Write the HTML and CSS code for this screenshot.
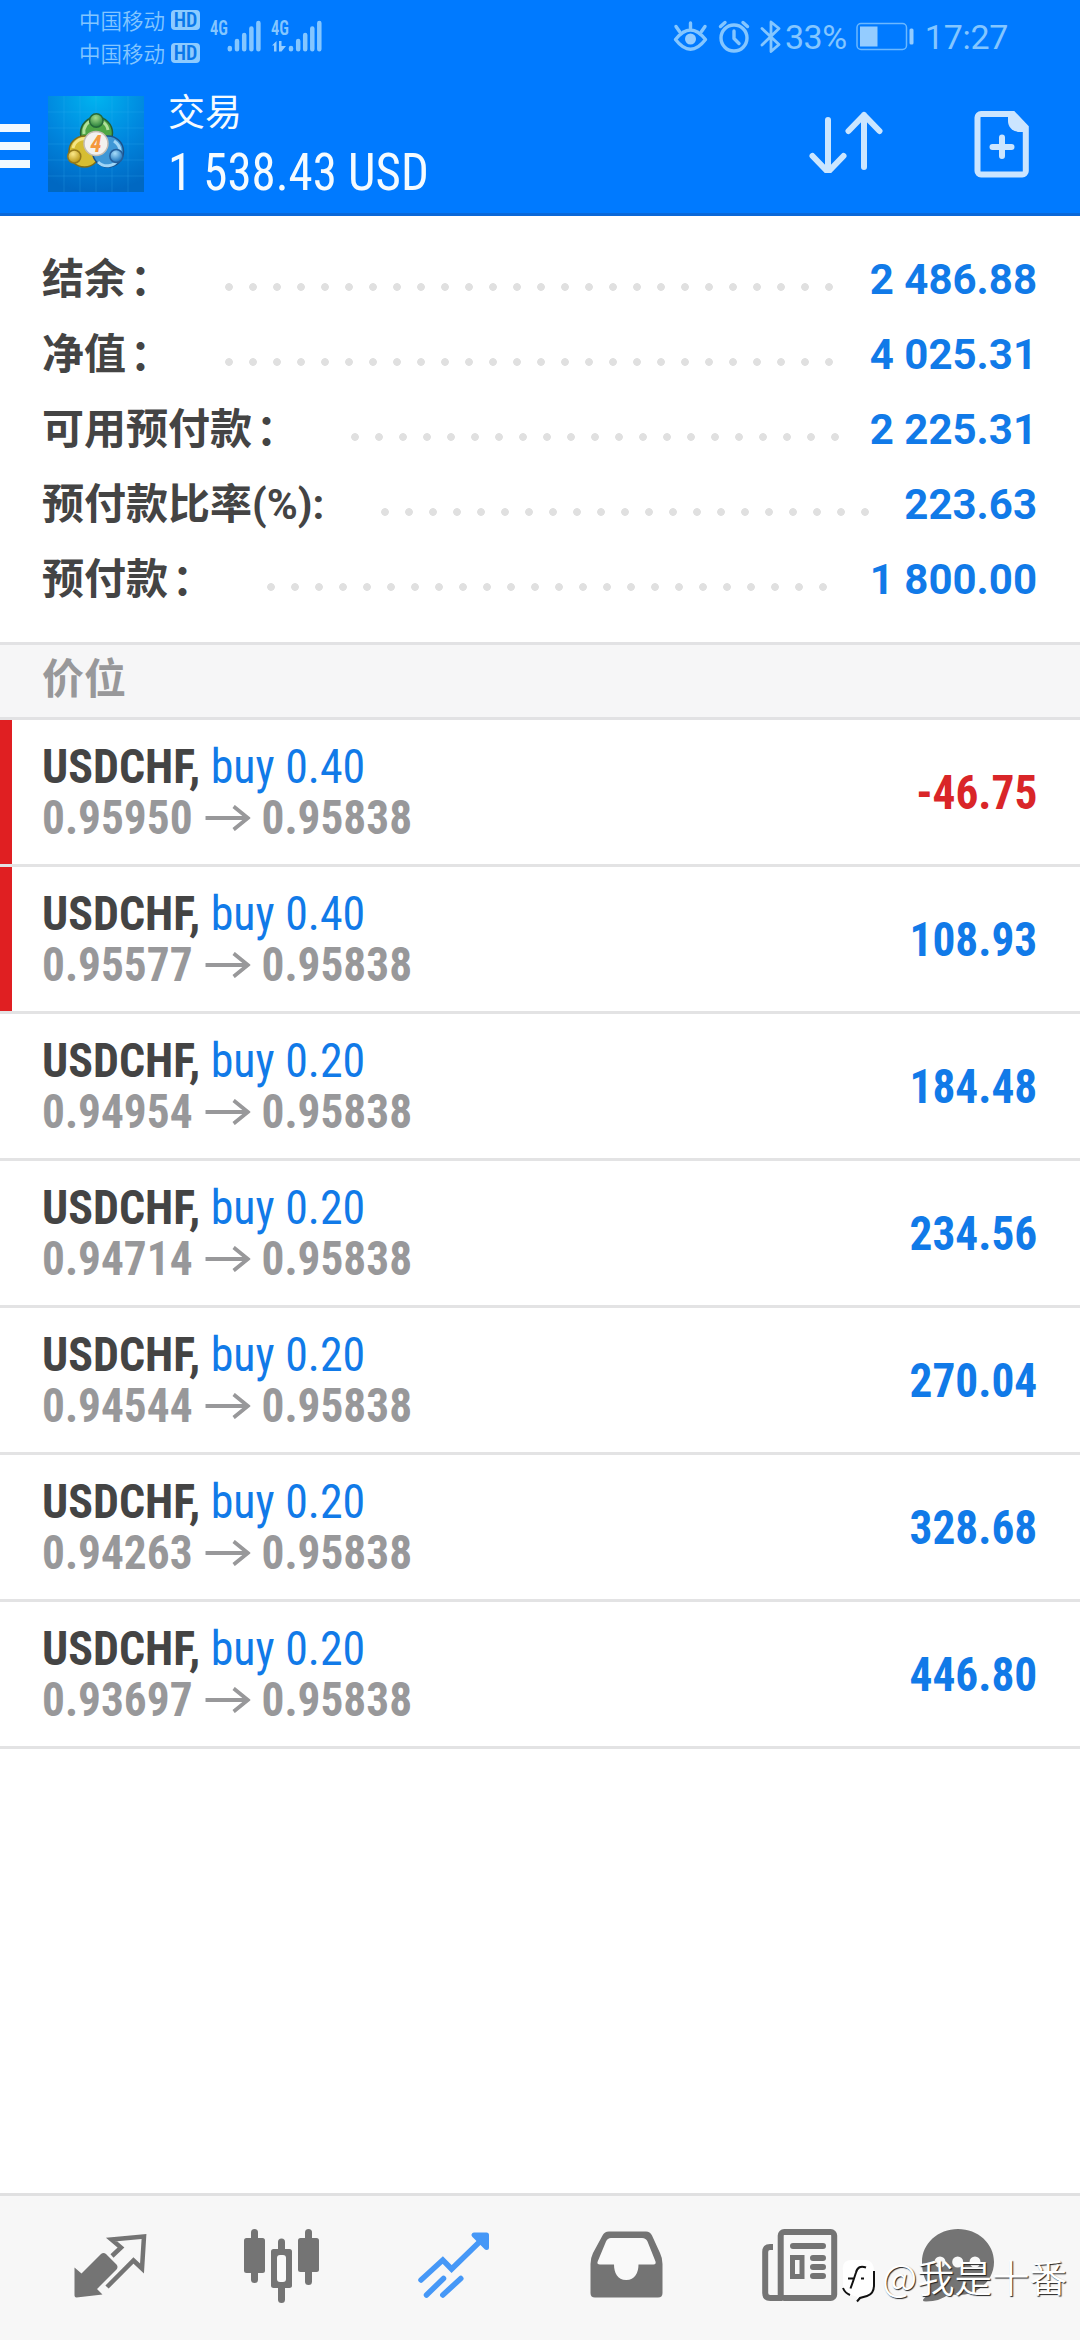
FILE: index.html
```html
<!DOCTYPE html>
<html lang="zh-CN">
<head>
<meta charset="utf-8">
<title>交易</title>
<link rel="stylesheet" href="styles.css">
</head>
<body>
<div class="app">
  <header class="top">
    <div class="status">
      <div class="carriers">
        <div class="carrier">中国移动<span class="hd">HD</span></div>
        <div class="carrier">中国移动<span class="hd">HD</span></div>
      </div>
      <svg class="signals" width="116" height="40" viewBox="208 16 116 40">
        <text x="210" y="35" textLength="18" lengthAdjust="spacingAndGlyphs">4G</text>
        <text x="271" y="35" textLength="18" lengthAdjust="spacingAndGlyphs">4G</text>
        <g class="bar">
          <path d="M229.8 48v1.200M237 41v8.200M244.200 35v14.200M251.400 28.500v20.700M258.400 23v26.200"/>
          <path d="M291 48v1.200M298.200 41v8.200M305.200 35v14.200M312.300 28.500v20.700M319.300 23v26.200"/>
        </g>
        <path class="fill" d="M272 45.500l4.500-4.500v10.500h-2.500v-6zM279 41h2.500v5h4.500l-4.500 5.500h-2.500z"/>
      </svg>
      <div class="system">
        <svg width="110" height="36" viewBox="671 19 110 36">
          <g class="line">
            <path d="M673.500 39.500Q688.500 20.500 703.500 39.500Q688.500 59 673.500 39.500Z"/>
            <path d="M688.500 28v-5M677.500 31.500l-3.500-5M699.500 31.500l3.500-5"/>
            <circle cx="732" cy="38" r="13"/>
            <path d="M732 31v7.500l5 5M718.500 26.500l4.500-4M745.500 26.500l-4.500-4"/>
            <path d="M760 28.500l17 16-8 7V22l8 6.500-17 16.500" stroke-width="2.800"/>
          </g>
          <circle class="fill" cx="688.500" cy="39" r="5.500"/>
        </svg>
        <span class="percent">33%</span>
        <svg class="battery" width="60" height="30" viewBox="855 22 60 30">
          <rect class="case" x="857" y="23.500" width="49.500" height="26" rx="4"/>
          <rect class="fill" x="860" y="26.500" width="17.500" height="20"/>
          <rect class="fill" x="909.500" y="28.500" width="4" height="16" rx="1.500"/>
        </svg>
        <span class="clock">17:27</span>
      </div>
    </div>
    <div class="toolbar">
      <div class="menu"><i></i><i></i><i></i></div>
      <svg class="logo" width="96" height="96" viewBox="0 0 96 96">
        <defs>
          <radialGradient id="sky" cx=".5" cy="0" r="1"><stop offset="0" stop-color="#00b4f0"/><stop offset=".55" stop-color="#0086de"/><stop offset="1" stop-color="#0068c2"/></radialGradient>
          <radialGradient id="gr" cx=".45" cy=".3" r=".7"><stop offset="0" stop-color="#a5dc8c"/><stop offset="1" stop-color="#237d37"/></radialGradient>
          <radialGradient id="ye" cx=".4" cy=".3" r=".7"><stop offset="0" stop-color="#fbe88a"/><stop offset="1" stop-color="#b99512"/></radialGradient>
          <radialGradient id="bl" cx=".4" cy=".3" r=".7"><stop offset="0" stop-color="#a7dcfa"/><stop offset="1" stop-color="#1871ba"/></radialGradient>
        </defs>
        <rect width="96" height="96" fill="url(#sky)"/>
        <path d="M16 0v96M32 0v96M48 0v96M64 0v96M80 0v96M0 16h96M0 32h96M0 48h96M0 64h96M0 80h96" stroke="#3cb4f5" stroke-opacity=".22"/>
        <g stroke-width="1.500">
          <circle cx="48.500" cy="37" r="16" fill="#4fa646" stroke="#245f35"/>
          <path d="M36 38a12 12 0 0 1 24-4" fill="none" stroke="#b1e19b" stroke-width="3"/>
          <circle cx="36.500" cy="55.500" r="15.500" fill="#d6bd32" stroke="#7c6c1a"/>
          <path d="M25 52a12 12 0 0 1 15-9" fill="none" stroke="#f4e583" stroke-width="3"/>
          <circle cx="60" cy="55.500" r="15.500" fill="#3e97d6" stroke="#1c528a"/>
          <path d="M50 66a13 13 0 0 0 20-2M66 45q6 4 6 10" fill="none" stroke="#9fd5f6" stroke-width="3"/>
          <circle cx="48.300" cy="24.500" r="6.800" fill="url(#gr)" stroke="#25693a"/>
          <circle cx="26.300" cy="60.500" r="6.500" fill="url(#ye)" stroke="#94791b"/>
          <circle cx="68.300" cy="60" r="6.500" fill="url(#bl)" stroke="#255f9c"/>
          <circle cx="48" cy="47.500" r="12" fill="#f3f1ee" stroke="#c4bdb3"/>
        </g>
        <text class="four" x="48" y="55.500" text-anchor="middle">4</text>
      </svg>
      <div class="heading">
        <div class="title">交易</div>
        <div class="profit">1 538.43 USD</div>
      </div>
      <svg class="sort" width="76" height="62" viewBox="808 111 76 62">
        <path d="M828 120v52M812.500 156l15.500 16 15.500-16M864 167v-52M848.500 131l15.500-16 15.500 16"/>
      </svg>
      <svg class="add" width="56" height="68" viewBox="974 110 56 68">
        <path class="frame" d="M982 114h31l12.800 13.500V171a3.500 3.500 0 0 1-3.500 3.500H981a3.500 3.500 0 0 1-3.500-3.500v-53.500a3.500 3.500 0 0 1 3.500-3.500z"/>
        <path class="fold" d="M1008 114h6l12 13v5h-5.500c-8 0-12.500-5-12.500-11z"/>
        <path class="frame" d="M1002 137.500v18.500M992.500 147h19"/>
      </svg>
    </div>
  </header>

  <section class="summary">
    <div class="row"><span class="label">结余<i>：</i></span><i class="dots"></i><b>2 486.88</b></div>
    <div class="row"><span class="label">净值<i>：</i></span><i class="dots"></i><b>4 025.31</b></div>
    <div class="row"><span class="label">可用预付款<i>：</i></span><i class="dots"></i><b>2 225.31</b></div>
    <div class="row"><span class="label">预付款比率(%):</span><i class="dots"></i><b>223.63</b></div>
    <div class="row"><span class="label">预付款<i>：</i></span><i class="dots"></i><b>1 800.00</b></div>
  </section>

  <h2 class="section">价位</h2>

  <svg width="0" height="0" class="defs"><symbol id="arrow" viewBox="0 0 48 26"><path d="M0 13h45M30 1.500L45 13 30 24.500" fill="none" stroke="currentColor" stroke-width="4"/></symbol></svg>

  <ul class="positions">
    <li class="alert"><div><p class="name">USDCHF, <span>buy 0.40</span></p><p class="price">0.95950<svg><use href="#arrow"/></svg>0.95838</p></div><b class="loss">-46.75</b></li>
    <li class="alert"><div><p class="name">USDCHF, <span>buy 0.40</span></p><p class="price">0.95577<svg><use href="#arrow"/></svg>0.95838</p></div><b>108.93</b></li>
    <li><div><p class="name">USDCHF, <span>buy 0.20</span></p><p class="price">0.94954<svg><use href="#arrow"/></svg>0.95838</p></div><b>184.48</b></li>
    <li><div><p class="name">USDCHF, <span>buy 0.20</span></p><p class="price">0.94714<svg><use href="#arrow"/></svg>0.95838</p></div><b>234.56</b></li>
    <li><div><p class="name">USDCHF, <span>buy 0.20</span></p><p class="price">0.94544<svg><use href="#arrow"/></svg>0.95838</p></div><b>270.04</b></li>
    <li><div><p class="name">USDCHF, <span>buy 0.20</span></p><p class="price">0.94263<svg><use href="#arrow"/></svg>0.95838</p></div><b>328.68</b></li>
    <li><div><p class="name">USDCHF, <span>buy 0.20</span></p><p class="price">0.93697<svg><use href="#arrow"/></svg>0.95838</p></div><b>446.80</b></li>
  </ul>

  <nav class="tabs">
    <svg viewBox="24 0 172 144">
      <path class="solid" d="M74.500 71.500l7 6L101 58q2.500-2 5 0l10.500 10.500q2 2.500 0 5L97 93l5.500 5.500-26 3q-2 0-2-2z"/>
      <path class="stroke" d="M112 60l9-8.500-9.500-8 32.500-3-2 32-8.500-8L107 91" stroke-width="4.500"/>
    </svg>
    <svg viewBox="196 0 172 144">
      <g class="solid"><rect x="244" y="42" width="21" height="35" rx="2.500"/><rect x="251" y="33" width="7" height="54" rx="3.500"/>
      <rect x="298" y="42" width="21" height="34" rx="2.500"/><rect x="305" y="33" width="7" height="56" rx="3.500"/>
      <rect x="278" y="42.500" width="7" height="16" rx="3.500"/><rect x="278" y="86" width="7" height="21" rx="3.500"/></g>
      <rect class="solid" x="271" y="53" width="21" height="39" rx="2.500"/><rect class="paper" x="277" y="59" width="9" height="27" rx="3"/>
    </svg>
    <svg class="active" viewBox="368 0 172 144">
      <path class="stroke" d="M421 84l21.800-20 8.800 9 34-33M426.500 99l17-16.500M442.800 99l18-16.500" stroke-width="5.500"/>
      <path class="stroke joined" d="M474 39h12.500v12.500z" stroke-width="5"/>
    </svg>
    <svg viewBox="540 0 172 144">
      <path class="solid" d="M609 35.500h37q4 0 6 4l8 17.500q2.500 5 2.500 11v29q0 4.500-4.500 4.500h-63q-4.500 0-4.500-4.500V68q0-6 2.500-11l9.500-17.500q2-4 6.500-4z"/>
      <path class="paper" d="M611 42h31q4 0 5.500 3.500l8 20q.8 3-2 3H638.500c0 8-3.500 15.500-12.300 15.500S614 76.500 614 68.500h-14q-3.500 0-2.300-3l8.300-20q1.500-3.500 5-3.500z"/>
    </svg>
    <svg viewBox="712 0 172 144">
      <g class="stroke"><rect x="780.700" y="36" width="53.500" height="66" rx="3.500" stroke-width="6"/>
      <path d="M773 51h-3q-4.800 0-4.800 5v41q0 5 5 5h12" stroke-width="6"/>
      <path d="M793 50h30M813 62h10M813 71h10M813 80h10" stroke-width="6" class="round"/>
      <rect x="792.500" y="61.500" width="9.500" height="19" stroke-width="5"/></g>
    </svg>
    <svg viewBox="884 0 172 144">
      <path class="solid" d="M958 33c20 0 36 14.500 36 33s-16 33-36 33q-5 0-9-1-9 7.500-23 7.500-5 0-2-3 5-4 6.500-11.500c-6-6-8.500-15-8.500-25 0-18.500 16-33 36-33z"/>
      <g class="paper"><circle cx="940" cy="66" r="5.500"/><circle cx="957.700" cy="66" r="5.500"/><circle cx="975" cy="66" r="5.500"/></g>
    </svg>
    <div class="credit">
      <svg width="37" height="45" viewBox="0 0 37 45">
        <path class="white" d="M12 1h13q9 0 9 12v13q0 9-7 11l-7 2-3 3v-4l-8-3q-6-3-6-9V12Q1 1 12 1z"/>
        <path class="ink" d="M34 12v14q0 9-7 11l-7 2-3 3.500M26 8.500q-8-3-10 5l-3 9-2.500 7M8 19.500h6M21 19.500h3M3 29q2 5 7 7"/>
      </svg>
      <span>@我是十番</span>
    </div>
  </nav>
</div>
</body>
</html>
```
FILE: styles.css
```css
* { box-sizing: border-box; margin: 0; padding: 0; }
body {
  width: 1080px;
  height: 2340px;
  background: #fff;
  font-family: Roboto, "Noto Sans CJK SC", sans-serif;
}
.app { display: flex; flex-direction: column; height: 2340px; }

/* Header */
.top { height: 216px; background: #007aff; border-bottom: 3px solid #0b68d8; }
.status { display: flex; height: 72px; padding: 4px 72px 0 79px; color: #84c6ff; }
.carriers { margin-top: -1px; }
.carrier { display: flex; align-items: center; height: 33px; font-size: 21.500px; font-weight: 350; }
.hd {
  display: flex; align-items: center; justify-content: center;
  width: 29px; height: 20px; margin-left: 6px; border-radius: 4px;
  background: #8dcbff; color: #0a78ea;
  font: 600 20px/20px "Roboto Condensed", Roboto, sans-serif;
}
.signals { margin: 12px 0 0 8px; }
.signals text { font: 600 19.500px "Roboto Condensed", Roboto, sans-serif; fill: #84c6ff; }
.bar { fill: none; stroke: #84c6ff; stroke-width: 4.500; stroke-linecap: round; }
.fill { fill: #94ccff; }
.system { display: flex; align-items: flex-start; margin-left: auto; font-size: 34px; }
.system > svg { margin-top: 15px; }
.system .line { fill: none; stroke: #84c6ff; stroke-width: 3.400; stroke-linecap: round; stroke-linejoin: round; }
.percent, .clock { line-height: 40px; margin-top: 13px; }
.percent { margin-left: 2px; letter-spacing: -.4px; }
.clock { margin-left: 10px; letter-spacing: -.3px; }
.system .battery { margin: 18px 0 0 8px; }
.case { fill: none; stroke: #6bb8ff; stroke-width: 1.500; }
.toolbar { display: flex; height: 141px; padding-right: 50px; }
.menu { display: flex; flex-direction: column; gap: 10px; width: 30px; margin: 52px 18px 0 0; }
.menu i { height: 8px; background: #f2f9ff; }
.logo { margin-top: 24px; }
.four { font: italic 700 23px "Roboto Condensed", Roboto, sans-serif; fill: #f5983c; }
.heading { margin: 16px 0 0 24px; color: #f5fbff; }
.title { height: 52px; font-size: 37px; line-height: 52px; }
.profit {
  height: 66px; font: 400 52px/66px "Roboto Condensed", Roboto, sans-serif;
  transform: scaleX(.94); transform-origin: left;
}
.sort { margin: 39px 90px 0 auto; }
.sort path { fill: none; stroke: #cbe6ff; stroke-width: 6; stroke-linecap: round; stroke-linejoin: round; }
.add { margin-top: 38px; }
.frame { fill: none; stroke: #cbe5ff; stroke-width: 6; stroke-linecap: round; }
.fold { fill: #cbe5ff; }

/* Account summary */
.summary { height: 426px; padding: 26px 43px 0 42px; }
.row { display: flex; align-items: center; height: 75px; }
.label { padding-top: 1px; color: #444; font: 700 42px/74px Roboto, "Noto Sans CJK SC", sans-serif; white-space: nowrap; }
.label i { display: inline-block; font-style: normal; transform: translate(4px, 1px); }
.dots {
  flex: 1; height: 8px; margin: 14px 28px 0 57px;
  background: radial-gradient(circle at 4px 4px, #e0e0e0 3.500px, transparent 4.200px) 0 0 / 24px 8px repeat-x;
}
.row b { color: #117ae8; font-size: 42px; line-height: 75px; }

/* Open positions */
.section {
  height: 78px; padding-left: 42px;
  border: solid #e2e2e4; border-width: 3px 0;
  background: #f6f6f7; color: #98989a;
  font: 700 42px/62px "Noto Sans CJK SC", sans-serif;
}
.defs { position: absolute; }
.positions { list-style: none; font-family: "Roboto Condensed", Roboto, sans-serif; }
.positions li {
  display: flex; align-items: center; justify-content: space-between;
  height: 147px; padding: 0 43px 0 42px; border-bottom: 3px solid #e3e3e4;
}
.alert { background: linear-gradient(#e01f22, #e01f22) 0 0 / 12px 100% no-repeat; }
.positions p { height: 51px; line-height: 51px; font-size: 48px; white-space: nowrap; transform-origin: left; }
.name { color: #444; font-weight: 700; transform: scaleX(.956); }
.name span { color: #117ae8; font-weight: 400; }
.price { display: flex; align-items: center; color: #98989a; font-weight: 700; transform: scaleX(.944); }
.price svg { width: 48px; height: 26px; margin: 0 12px 0 13px; }
.positions b { color: #117ae8; font-size: 48px; transform: scaleX(.944); transform-origin: right; }
.positions .loss { color: #d92528; }

/* Tab bar */
.tabs {
  position: relative; display: flex; height: 147px; margin-top: auto; padding-left: 24px;
  border-top: 3px solid #e0e0e1; background: #f7f7f7; color: #747474;
}
.tabs > svg { flex: none; width: 172px; height: 144px; }
.tabs .active { color: #4698f7; }
.solid { fill: currentColor; }
.stroke { fill: none; stroke: currentColor; }
.active .stroke { stroke-linecap: round; }
.active .joined { fill: currentColor; stroke-linejoin: round; }
.round { stroke-linecap: round; }
.paper { fill: #f9f9f9; }
.credit {
  position: absolute; left: 840px; top: 63px;
  display: flex; color: #fff; font: 350 37.500px/34px "Noto Sans CJK SC", sans-serif;
  text-shadow: 1px 1px 1px #222;
}
.credit span { margin-left: 5px; white-space: nowrap; }
.white { fill: #fff; }
.ink { fill: none; stroke: #111; stroke-width: 2; }
```
